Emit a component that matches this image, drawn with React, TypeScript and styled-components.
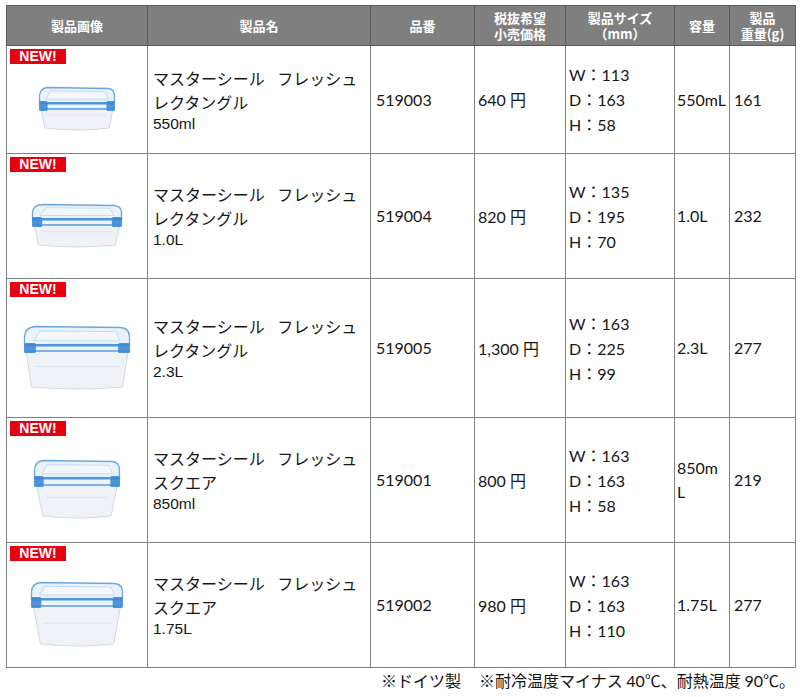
import React from 'react'
import styled, { createGlobalStyle } from 'styled-components'

const GlobalStyle = createGlobalStyle`
  html, body {
    margin: 0;
    padding: 0;
    background: #ffffff;
  }
  body {
    font-family: Lato, "Noto Sans CJK JP", sans-serif;
    color: #161616;
  }
`

const Page = styled.div`
  width: 800px;
  padding: 5px 5px 0 6px;
  box-sizing: border-box;
`

const Table = styled.table`
  width: 789px;
  border-collapse: collapse;
  table-layout: fixed;
`

const HeadCell = styled.th<{ $w: number }>`
  box-sizing: border-box;
  width: ${props => props.$w}px;
  height: 40px;
  padding: 0;
  background: #7f7f7f;
  border: 1px solid #5a5a5a;
  color: #ffffff;
  font-family: "Noto Sans CJK JP", sans-serif;
  font-weight: 700;
  font-size: 13px;
  line-height: 16px;
  text-align: center;
  vertical-align: middle;
  white-space: pre-line;
`

const Row = styled.tr<{ $h: number }>`
  height: ${props => props.$h}px;
`

const Cell = styled.td<{ $pad?: number }>`
  padding: 0 0 0 ${props => props.$pad ?? 3}px;
  border: 1px solid #828282;
  vertical-align: middle;
  font-size: 16px;
  line-height: 24px;
  white-space: pre-line;
`

const ImageCell = styled.td`
  padding: 0;
  border: 1px solid #828282;
  vertical-align: top;
`

const ImageStack = styled.div<{ $h: number }>`
  height: ${props => props.$h - 1}px;
  display: flex;
  flex-direction: column;
  padding: 3px 0 0 3px;
  box-sizing: border-box;
`

const Badge = styled.div`
  align-self: flex-start;
  width: 56px;
  height: 15px;
  background: #e8000f;
  color: #ffffff;
  font-family: "Liberation Sans", Arial, sans-serif;
  font-weight: 700;
  font-size: 14px;
  line-height: 15px;
  text-align: center;
`

const Picture = styled.div`
  flex: 1;
  display: flex;
  align-items: center;
  justify-content: center;
  padding-right: 3px;
`

const NameLine = styled.div`
  font-family: "Noto Sans CJK JP", sans-serif;
  font-size: 16px;
  line-height: 24px;
  word-spacing: 9px;
`

const SizeLine = styled.div`
  font-family: "Liberation Sans", Arial, sans-serif;
  font-size: 15.5px;
  line-height: 20px;
`

const Yen = styled.span`
  font-family: "Noto Sans CJK JP", sans-serif;
`

const DimLine = styled.div`
  line-height: 25px;
`

const Footer = styled.div`
  width: 789px;
  display: flex;
  justify-content: flex-end;
  gap: 18px;
  font-family: "Noto Sans CJK JP", sans-serif;
  font-size: 16px;
  line-height: 24px;
  color: #111111;
`

const Num = styled.span`
  font-family: Lato, sans-serif;
`

type Shape = { w: number; h: number; lid: number; square?: boolean }

function FoodBox({ w, h, lid, square }: Shape) {
  const rim = Math.round(h * lid)
  const inset = w * (square ? 0.09 : 0.06)
  const band = rim + (square ? 6 : 5)
  const clipW = w * 0.11
  return (
    <svg width={w} height={h} viewBox={`0 0 ${w} ${h}`}>
      <path
        d={`M2 ${rim} L${w - 2} ${rim} L${w - 2 - inset} ${h - 3} Q${w / 2} ${h + 1} ${2 + inset} ${h - 3} Z`}
        fill="#eef2f7"
        stroke="#d2dae4"
        strokeWidth={1}
      />
      <path
        d={`M${inset + 5} ${h * 0.64} L${w - inset - 5} ${h * 0.64}`}
        stroke="#dde4ec"
        strokeWidth={1}
      />
      <path
        d={`M${w * 0.12} 1.5 L${w * 0.9} 2.5 Q${w - 1.5} 3 ${w - 1.5} ${rim * 0.6} L${w - 1.5} ${rim} L1.5 ${rim} L1.5 ${rim * 0.6} Q2 2 ${w * 0.12} 1.5 Z`}
        fill="#e9f1fa"
        stroke="#6aa8e2"
        strokeWidth={1.3}
      />
      <path
        d={`M${w * 0.16} ${rim * 0.3} L${w * 0.86} ${rim * 0.33} L${w * 0.9} ${rim * 0.78} L${w * 0.1} ${rim * 0.78} Z`}
        fill="#f3f7fb"
        stroke="#bcd5ee"
        strokeWidth={0.8}
      />
      <rect x={2} y={rim - 1} width={w - 4} height={2.5} fill="#4b96dc" />
      <rect x={3} y={band} width={w - 6} height={2} fill="#6eaae3" opacity={0.9} />
      <rect x={1} y={rim - 2} width={clipW} height={band - rim + 5} rx={1.5} fill="#3e8ad6" opacity={0.9} />
      <rect x={w - 1 - clipW} y={rim - 2} width={clipW} height={band - rim + 5} rx={1.5} fill="#3e8ad6" opacity={0.9} />
    </svg>
  )
}

const COLUMNS = [
  { label: '製品画像', w: 141 },
  { label: '製品名', w: 223 },
  { label: '品番', w: 104 },
  { label: '税抜希望\n小売価格', w: 91 },
  { label: '製品サイズ\n（mm）', w: 109 },
  { label: '容量', w: 55 },
  { label: '製品\n重量(g)', w: 66 },
]

const PRODUCTS = [
  {
    h: 108,
    box: { w: 78, h: 45, lid: 0.38 },
    name: ['マスターシール フレッシュ', 'レクタングル'],
    size: '550ml',
    code: '519003',
    price: '640',
    dims: ['113', '163', '58'],
    volume: '550mL',
    weight: '161',
  },
  {
    h: 125,
    box: { w: 92, h: 45, lid: 0.36 },
    name: ['マスターシール フレッシュ', 'レクタングル'],
    size: '1.0L',
    code: '519004',
    price: '820',
    dims: ['135', '195', '70'],
    volume: '1.0L',
    weight: '232',
  },
  {
    h: 139,
    box: { w: 108, h: 65, lid: 0.3 },
    name: ['マスターシール フレッシュ', 'レクタングル'],
    size: '2.3L',
    code: '519005',
    price: '1,300',
    dims: ['163', '225', '99'],
    volume: '2.3L',
    weight: '277',
  },
  {
    h: 125,
    box: { w: 88, h: 60, lid: 0.32, square: true },
    name: ['マスターシール フレッシュ', 'スクエア'],
    size: '850ml',
    code: '519001',
    price: '800',
    dims: ['163', '163', '58'],
    volume: '850m\nL',
    weight: '219',
  },
  {
    h: 125,
    box: { w: 94, h: 66, lid: 0.28, square: true },
    name: ['マスターシール フレッシュ', 'スクエア'],
    size: '1.75L',
    code: '519002',
    price: '980',
    dims: ['163', '163', '110'],
    volume: '1.75L',
    weight: '277',
  },
]

export default function App() {
  return (
    <Page>
      <GlobalStyle />
      <Table>
        <thead>
          <tr>
            {COLUMNS.map(col => (
              <HeadCell key={col.label} $w={col.w}>
                {col.label}
              </HeadCell>
            ))}
          </tr>
        </thead>
        <tbody>
          {PRODUCTS.map(item => (
            <Row key={item.code} $h={item.h}>
              <ImageCell>
                <ImageStack $h={item.h}>
                  <Badge>NEW!</Badge>
                  <Picture>
                    <FoodBox {...item.box} />
                  </Picture>
                </ImageStack>
              </ImageCell>
              <Cell $pad={5}>
                {item.name.map(line => (
                  <NameLine key={line}>{line}</NameLine>
                ))}
                <SizeLine>{item.size}</SizeLine>
              </Cell>
              <Cell $pad={5}>{item.code}</Cell>
              <Cell $pad={3}>
                {item.price} <Yen>円</Yen>
              </Cell>
              <Cell $pad={3}>
                <DimLine>W：{item.dims[0]}</DimLine>
                <DimLine>D：{item.dims[1]}</DimLine>
                <DimLine>H：{item.dims[2]}</DimLine>
              </Cell>
              <Cell $pad={2}>{item.volume}</Cell>
              <Cell $pad={4}>{item.weight}</Cell>
            </Row>
          ))}
        </tbody>
      </Table>
      <Footer>
        <span>※ドイツ製</span>
        <span>
          ※耐冷温度マイナス <Num>40</Num>℃、耐熱温度 <Num>90</Num>℃。
        </span>
      </Footer>
    </Page>
  )
}
